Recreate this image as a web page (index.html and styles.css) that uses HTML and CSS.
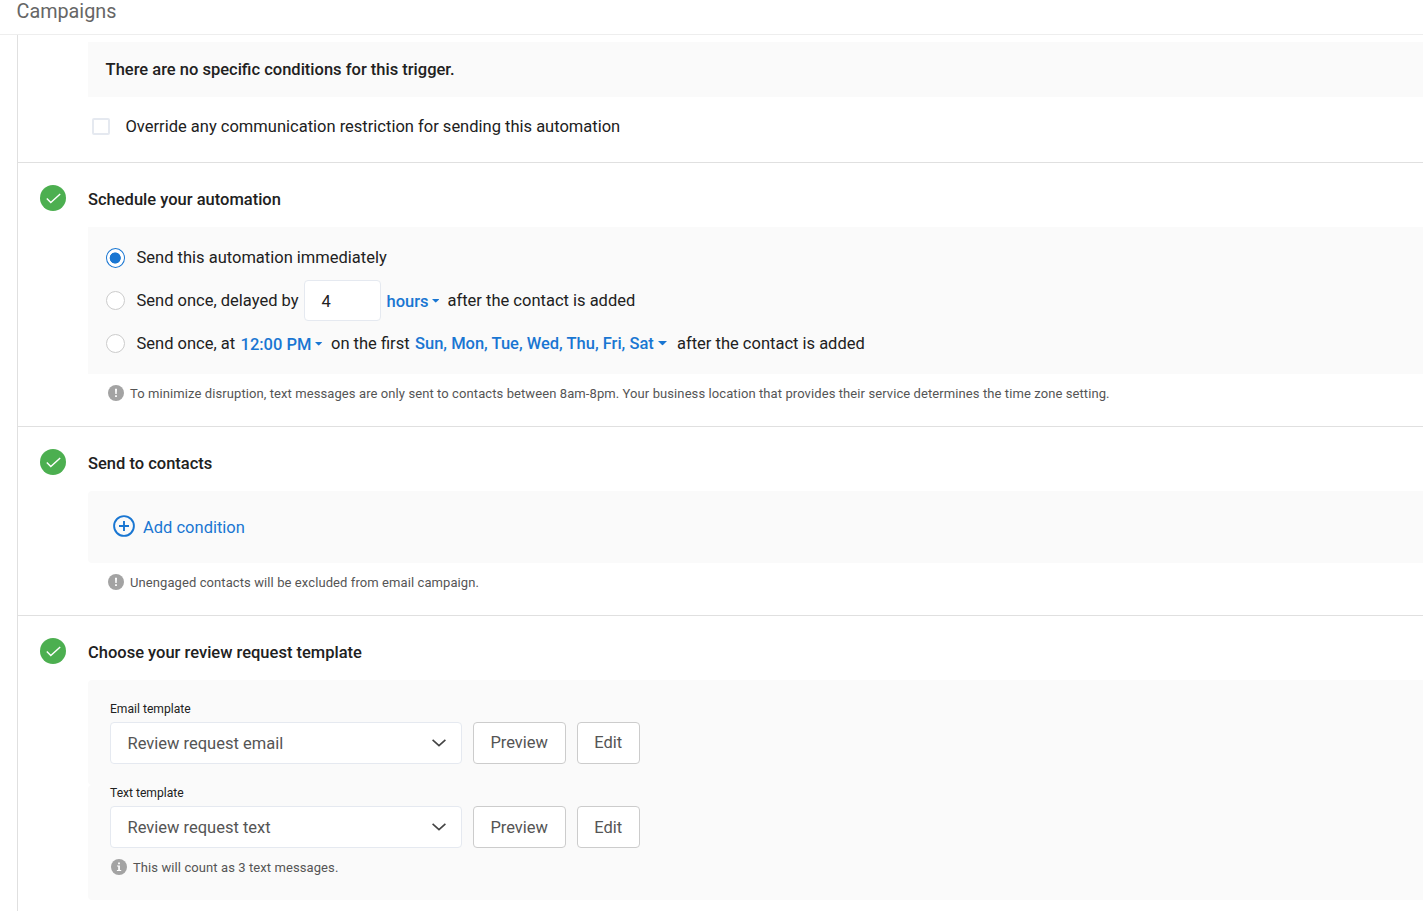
FILE: index.html
```html
<!DOCTYPE html>
<html lang="en">
<head>
<meta charset="utf-8">
<title>Campaigns</title>
<link rel="stylesheet" href="styles.css">
</head>
<body>
<svg class="defs" width="0" height="0">
  <symbol id="check" viewBox="0 0 26 26"><circle cx="13" cy="13" r="13" fill="#4caf50"/><path d="M6.8 13.6l4 4L20.2 9" fill="none" stroke="#fff" stroke-width="1.4"/></symbol>
  <symbol id="alert" viewBox="0 0 16 16"><circle cx="8" cy="8" r="8" fill="#a3a3a3"/><path d="M7 3.8h2L8.7 9H7.3zM7.1 10.3h1.8v1.7H7.1z" fill="#fff"/></symbol>
  <symbol id="info" viewBox="0 0 16 16"><circle cx="8" cy="8" r="8" fill="#a3a3a3"/><path d="M7.1 3.6h1.8v1.6H7.1zM6 6.4h2.9v4.7h1.3v1H5.9v-1h1.3V7.4H6z" fill="#fff"/></symbol>
  <symbol id="chevron" viewBox="0 0 14 8"><path d="M.6.8L7 6.7 13.4.8" fill="none" stroke="#444" stroke-width="1.6"/></symbol>
  <symbol id="caret" viewBox="0 0 8 4"><path d="M0 0h8L4 4z" fill="#1976d2"/></symbol>
</svg>
<header class="top">Campaigns</header>
<main class="steps">
  <section class="step first">
    <div class="panel notice">There are no specific conditions for this trigger.</div>
    <label class="override"><span class="box"></span><span class="t-override">Override any communication restriction for sending this automation</span></label>
  </section>
  <section class="step schedule">
    <h2 class="title"><svg class="check"><use href="#check"/></svg>Schedule your automation</h2>
    <div class="panel options">
      <div class="option"><span class="radio on"></span><span>Send this automation immediately</span></div>
      <div class="option"><span class="radio"></span><span class="w-delay">Send once, delayed by</span><span class="number">4</span><b class="link w-hours">hours</b><svg class="caret"><use href="#caret"/></svg><span>after the contact is added</span></div>
      <div class="option"><span class="radio"></span><span class="w-at">Send once, at</span><b class="link w-time">12:00 PM</b><svg class="caret"><use href="#caret"/></svg><span class="w-first">on the first</span><b class="link days">Sun, Mon, Tue, Wed, Thu, Fri, Sat</b><svg class="caret wide"><use href="#caret"/></svg><span>after the contact is added</span></div>
    </div>
    <p class="note"><svg class="dot"><use href="#alert"/></svg>To minimize disruption, text messages are only sent to contacts between 8am-8pm. Your business location that provides their service determines the time zone setting.</p>
  </section>
  <section class="step contacts">
    <h2 class="title"><svg class="check"><use href="#check"/></svg>Send to contacts</h2>
    <div class="panel add"><svg class="plus" viewBox="0 0 22 22"><circle cx="11" cy="11" r="9.9"/><path d="M11 6v10M6 11h10"/></svg><span>Add condition</span></div>
    <p class="note"><svg class="dot"><use href="#alert"/></svg>Unengaged contacts will be excluded from email campaign.</p>
  </section>
  <section class="step template">
    <h2 class="title"><svg class="check"><use href="#check"/></svg>Choose your review request template</h2>
    <div class="panel tpl tpl-email">
      <div class="label">Email template</div>
      <div class="row"><div class="select"><span>Review request email</span><svg class="chev"><use href="#chevron"/></svg></div><button class="btn preview">Preview</button><button class="btn edit">Edit</button></div>
    </div>
    <div class="panel tpl tpl-text">
      <div class="label">Text template</div>
      <div class="row lower"><div class="select"><span>Review request text</span><svg class="chev"><use href="#chevron"/></svg></div><button class="btn preview">Preview</button><button class="btn edit">Edit</button></div>
      <p class="note count"><svg class="dot"><use href="#info"/></svg>This will count as 3 text messages.</p>
    </div>
  </section>
</main>
</body>
</html>
```
FILE: styles.css
```css
* { box-sizing: border-box; }
body { margin: 0; height: 911px; overflow: hidden; background: #fff; color: #212121; font: 16.5px/20px Roboto, sans-serif; }
.defs { display: block; height: 0; }
.top { height: 35px; padding: 1px 0 0 16.5px; border-bottom: 1px solid #eee; color: #666; font-size: 19.8px; line-height: 21px; }
.steps { margin-left: 17px; height: 876px; border-left: 1px solid #e0e0e0; }
.step { padding-left: 70px; border-bottom: 1px solid #e0e0e0; }
.first { height: 128px; padding-top: 7px; }
.schedule { height: 264px; }
.contacts { height: 189px; }
.template { border: 0; }
.panel { background: #fafafa; border-radius: 4px 0 0 4px; }
.notice { height: 55px; padding: 18px 17.6px; border-radius: 0; font-weight: 500; white-space: nowrap; }
.override { display: flex; align-items: center; margin-top: 19px; padding-left: 4px; height: 20px; }
.t-override { padding-top: 2px; }
.box { width: 18px; height: 17px; border: 2px solid #e5e9f0; border-radius: 2px; background: #fff; margin-right: 15.5px; }
.title { display: flex; align-items: center; margin: 0 0 0 -48px; height: 64px; padding-top: 9px; font-size: 16.5px; font-weight: 500; }
.check { width: 26px; height: 26px; margin: -4px 22px 0 0; }
.options { height: 147px; padding: 9px 0 0 18px; border-radius: 0; }
.option { display: flex; align-items: center; height: 43px; white-space: nowrap; }
.radio { width: 19px; height: 19px; border: 1px solid #ccc; border-radius: 50%; background: #fff; margin: 0 11.5px 0 0; flex: none; }
.radio.on { height: 20px; margin-top: 1px; border-color: #1976d2; background: radial-gradient(circle at 8.2px 9px, #1976d2 5.2px, #fff 5.9px); }
.number { width: 77px; height: 41px; margin-right: 5.5px; padding: 11px 16.5px; border: 1px solid #e5e9f0; border-radius: 4px; background: #fff; }
.link { color: #1976d2; font-weight: 500; padding-top: 2px; }
.days { padding-top: 0; width: 243.5px; }
.w-delay { width: 167.5px; }
.w-hours { width: 45.5px; }
.w-at { width: 104px; }
.w-time { width: 74.8px; }
.w-first { width: 84px; }
.caret { width: 7.4px; height: 3.7px; margin: 1px 8.1px 0 0; }
.caret.wide { width: 9px; height: 4.5px; margin: 0 9.5px 0 0; }
.w-time + .caret { margin-right: 8.3px; }
.note { display: flex; align-items: center; margin: 10px 0 0 20px; height: 20px; color: #555; font-size: 13px; letter-spacing: .09px; white-space: nowrap; }
.dot { width: 16px; height: 16px; margin: -2px 6px 0 0; }
.add { display: flex; align-items: center; height: 72px; padding-left: 25px; color: #1976d2; }
.add span { padding-top: 2px; }
.plus { width: 22px; height: 22px; margin: -2px 8px 0 0; fill: none; stroke: #1976d2; stroke-width: 1.9; }
.tpl { padding-left: 22px; }
.tpl-email { height: 105px; padding-top: 19px; }
.tpl-text { height: 115px; padding-top: 0; }
.label { height: 23px; line-height: 20px; font-size: 12.1px; }
.tpl-text .label { line-height: 16px; height: 21px; }
.row { display: flex; height: 42px; }
.select { display: flex; align-items: center; justify-content: space-between; width: 352px; padding: 0 15.5px 0 16.5px; margin-right: 11px; border: 1px solid #e5e9f0; border-radius: 4px; background: #fff; color: #555; }
.select span { padding-top: 2px; }
.chev { width: 14px; height: 8px; margin-top: -1px; }
.btn { margin: 0 11px 0 0; padding: 0 .6px 0 0; border: 1px solid #ccc; border-radius: 4px; background: #fff; color: #555; font: 16.5px/20px Roboto, sans-serif; }
.lower .btn { padding-top: 2px; }
.preview { width: 93px; }
.edit { width: 63px; }
.count { margin: 10px 0 0 1px; }
```
